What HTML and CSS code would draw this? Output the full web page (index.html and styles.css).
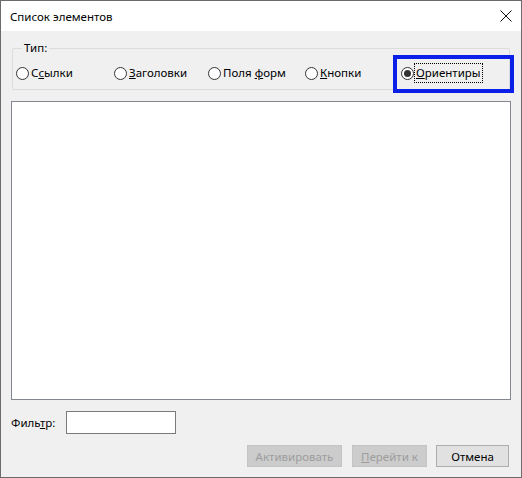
FILE: index.html
```html
<!DOCTYPE html>
<html lang="ru">
<head>
    <meta charset="UTF-8">
    <title>Список элементов</title>
    <link rel="stylesheet" href="styles.css">
</head>
<body>
    <div class="window">
        <div class="titlebar">
            <span class="title">Список элементов</span>
            <span class="close">
                <svg width="12" height="12" viewBox="0 0 12 12">
                    <path d="M0.5 0.5 L11.5 11.5 M11.5 0.5 L0.5 11.5" stroke="#111" stroke-width="1" fill="none"/>
                </svg>
            </span>
        </div>

        <div class="content">
            <fieldset class="type-group">
                <legend>Тип:</legend>
                <div class="radios">
                    <label class="radio"><span class="dot"></span><span>С<u>с</u>ылки</span></label>
                    <label class="radio"><span class="dot"></span><span><u>З</u>аголовки</span></label>
                    <label class="radio"><span class="dot"></span><span>Поля <u>ф</u>орм</span></label>
                    <label class="radio"><span class="dot"></span><span><u>К</u>нопки</span></label>
                    <label class="radio checked"><span class="dot"></span><span class="focus"><u>О</u>риентиры</span></label>
                    <span class="highlight"></span>
                </div>
            </fieldset>

            <div class="list"></div>

            <div class="filter-row">
                <label class="filter-label">Филь<u>т</u>р:</label>
                <div class="input"></div>
            </div>

            <div class="buttons">
                <div class="btn disabled wide">Активировать</div>
                <div class="btn disabled"><u>П</u>ерейти к</div>
                <div class="btn cancel">Отмена</div>
            </div>
        </div>
    </div>
</body>
</html>
```

FILE: styles.css
```css
* {
    margin: 0;
    padding: 0;
    box-sizing: border-box;
}

body {
    font-family: "Noto Sans", sans-serif;
    font-size: 11.5px;
    color: #000;
    background: #f0f0f0;
}

u {
    text-decoration-thickness: 1px;
    text-underline-offset: 1px;
}

.window {
    width: 522px;
    height: 478px;
    border: 1px solid #6b6b6b;
    background: #f0f0f0;
    display: flex;
    flex-direction: column;
}

.titlebar {
    height: 30px;
    background: #fff;
    display: flex;
    align-items: center;
    justify-content: space-between;
    padding: 0 9px;
}

.close {
    display: flex;
}

.content {
    padding: 0 10px;
    flex: 1;
    display: flex;
    flex-direction: column;
}

/* group box with the radio buttons */
.type-group {
    margin: 9px 1px 0 1px;
    border: 1px solid #dcdcdc;
    border-radius: 2px;
    padding: 9px 0 8px 3px;
}

.type-group legend {
    margin-left: 6px;
    padding: 0 2px;
    line-height: 16px;
}

.radios {
    position: relative;
    display: grid;
    grid-template-columns: 98px 94px 97px 96px auto;
    line-height: 16px;
}

.radio {
    display: flex;
    align-items: center;
    gap: 2px;
}

.dot {
    width: 13px;
    height: 13px;
    border: 1px solid #333;
    border-radius: 50%;
    background: #fff;
    display: flex;
    align-items: center;
    justify-content: center;
}

.checked .dot::after {
    content: "";
    width: 7px;
    height: 7px;
    border-radius: 50%;
    background: #333;
}

.focus {
    outline: 1px dotted #000;
    outline-offset: 1px;
}

/* blue frame around the selected option */
.highlight {
    position: absolute;
    left: 377px;
    top: -10px;
    width: 121px;
    height: 38px;
    border: 4px solid #0a1fe8;
}

.list {
    margin-top: 11px;
    height: 299px;
    background: #fff;
    border: 1px solid #828790;
}

.filter-row {
    margin-top: 11px;
    display: flex;
    align-items: center;
}

.filter-label {
    width: 55px;
}

.input {
    width: 110px;
    height: 23px;
    background: #fff;
    border: 1px solid #7a7a7a;
}

.buttons {
    margin-top: 11px;
    display: flex;
    justify-content: flex-end;
    gap: 9px;
    padding-right: 2px;
}

.btn {
    width: 75px;
    height: 22px;
    background: #e1e1e1;
    border: 1px solid #adadad;
    display: flex;
    align-items: center;
    justify-content: center;
}

.btn.wide {
    width: 95px;
    margin-right: 1px;
}

.btn.cancel {
    width: 73px;
}

.btn.disabled {
    background: #cccccc;
    border-color: #c4c4c4;
    color: #9d9d9d;
}
```
